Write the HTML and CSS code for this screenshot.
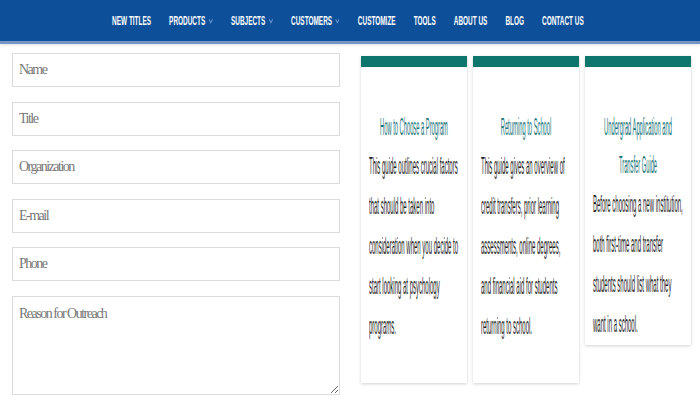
FILE: index.html
```html
<!DOCTYPE html>
<html lang="en">
<head>
<meta charset="utf-8">
<title>Contact</title>
<link rel="stylesheet" href="styles.css">
</head>
<body>
<header class="topnav">
  <ul class="menu">
    <li>NEW TITLES</li>
    <li>PRODUCTS<svg class="chev" viewBox="0 0 8 5"><polyline points="1,1 4,4 7,1"/></svg></li>
    <li>SUBJECTS<svg class="chev" viewBox="0 0 8 5"><polyline points="1,1 4,4 7,1"/></svg></li>
    <li>CUSTOMERS<svg class="chev" viewBox="0 0 8 5"><polyline points="1,1 4,4 7,1"/></svg></li>
    <li>CUSTOMIZE</li>
    <li>TOOLS</li>
    <li>ABOUT US</li>
    <li>BLOG</li>
    <li>CONTACT US</li>
  </ul>
</header>
<main class="content">
  <form class="form">
    <input class="field" type="text" placeholder="Name">
    <input class="field" type="text" placeholder="Title">
    <input class="field" type="text" placeholder="Organization">
    <input class="field" type="email" placeholder="E-mail">
    <input class="field" type="tel" placeholder="Phone">
    <textarea class="field field--area" placeholder="Reason for Outreach"></textarea>
  </form>
  <section class="cards">
    <article class="card card--tall">
      <div class="card-bar"></div>
      <div class="card-body">
        <div class="card-text">
          <h3 class="card-title">How to Choose a Program</h3>
          <p class="card-desc">This guide outlines crucial factors<br>that should be taken into<br>consideration when you decide to<br>start looking at psychology<br>programs.</p>
        </div>
      </div>
    </article>
    <article class="card card--tall">
      <div class="card-bar"></div>
      <div class="card-body">
        <div class="card-text">
          <h3 class="card-title">Returning to School</h3>
          <p class="card-desc">This guide gives an overview of<br>credit transfers, prior learning<br>assessments, online degrees,<br>and financial aid for students<br>returning to school.</p>
        </div>
      </div>
    </article>
    <article class="card">
      <div class="card-bar"></div>
      <div class="card-body">
        <div class="card-text">
          <h3 class="card-title">Undergrad Application and<br>Transfer Guide</h3>
          <p class="card-desc">Before choosing a new institution,<br>both first-time and transfer<br>students should list what they<br>want in a school.</p>
        </div>
      </div>
    </article>
  </section>
</main>
</body>
</html>
```
FILE: styles.css
```css
* { box-sizing: border-box; }

body {
  margin: 0;
  background: #fff;
  font-family: "Liberation Sans", Arial, sans-serif;
}

.topnav {
  height: 44px;
  background: #0d4f99;
  border-bottom: 3px solid #7396c4;
  box-shadow: 0 1px 3px rgba(0, 0, 0, 0.12);
  display: flex;
  justify-content: center;
  align-items: center;
  overflow: hidden;
}

.menu {
  flex: none;
  display: flex;
  align-items: center;
  gap: 35px;
  list-style: none;
  margin: 0;
  padding: 0;
  color: #fff;
  font: bold 12.5px "Liberation Sans", Arial, sans-serif;
  white-space: nowrap;
  transform: translateX(-2px) scaleX(0.515);
}

.menu li {
  display: flex;
  align-items: center;
}

.chev {
  width: 9px;
  height: 6px;
  margin-left: 6px;
  fill: none;
  stroke: #6f9fd8;
  stroke-width: 1.2;
}

.content {
  display: flex;
  align-items: flex-start;
  padding: 9px 0 0 12px;
}

.form {
  width: 328px;
  display: flex;
  flex-direction: column;
  gap: 14.5px;
  margin: 0;
}

.field {
  display: block;
  width: 100%;
  height: 34px;
  margin: 0;
  padding: 0 6px;
  border: 1px solid #dcdcdc;
  border-radius: 0;
  background: #fff;
  color: #555;
  font: 14px "Liberation Serif", "Times New Roman", serif;
  letter-spacing: -1.5px;
  outline: none;
}

.field::placeholder {
  color: #777;
  opacity: 1;
}

.field--area {
  height: 99px;
  padding-top: 9px;
}

.cards {
  margin-left: 21px;
  margin-top: 3px;
  display: grid;
  grid-template-columns: repeat(3, 106px);
  gap: 6px;
  align-items: start;
}

.card {
  background: #fff;
  box-shadow: 0 1px 3px rgba(0, 0, 0, 0.18);
  overflow: hidden;
}

.card-bar {
  height: 11px;
  background: #0f766e;
}

.card-body {
  padding: 41px 8px 1px;
}

.card--tall .card-body {
  padding-bottom: 37px;
}

.card-text {
  width: calc(100% / 0.25);
  transform: scaleX(0.25);
  transform-origin: left top;
  white-space: nowrap;
}

.card-title {
  margin: 0;
  font: 400 23px/38px "Liberation Sans", Arial, sans-serif;
  color: #187479;
  text-align: center;
}

.card-desc {
  margin: 0;
  font: 24px/40px "Liberation Sans", Arial, sans-serif;
  color: #1e1e1e;
}
```
